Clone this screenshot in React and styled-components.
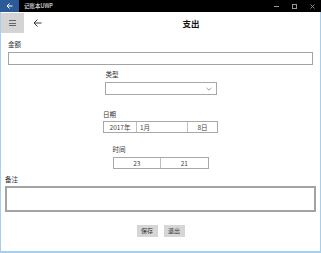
import React from "react";
import styled, { createGlobalStyle } from "styled-components";

const Global = createGlobalStyle`
  html, body { margin: 0; padding: 0; background: #fff; }
  body { font-family: "Noto Sans CJK SC", "Noto Sans", sans-serif; }
  * { box-sizing: border-box; }
`;

const Window = styled.div`
  width: 321px;
  height: 253px;
  display: flex;
  flex-direction: column;
  background: #fff;
`;

const TitleBar = styled.div`
  height: 12px;
  background: #000;
  display: flex;
  align-items: center;
  color: #fff;
`;

const TitleBack = styled.div`
  width: 19px;
  height: 12px;
  background: #2b5a98;
  display: flex;
  align-items: center;
  justify-content: center;
`;

const AppName = styled.span`
  margin-left: 5px;
  font-size: 5.5px;
  line-height: 12px;
  color: #fff;
  flex: 1;
`;

const Controls = styled.div`
  display: flex;
  align-items: center;
  height: 12px;
`;

const Ctrl = styled.div`
  width: 18px;
  height: 12px;
  display: flex;
  align-items: center;
  justify-content: center;
`;

const Frame = styled.div`
  flex: 1;
  display: flex;
  flex-direction: column;
  border-style: solid;
  border-color: #a6cfee;
  border-width: 0 1px 2px 1px;
`;

const Header = styled.div`
  display: flex;
  align-items: center;
  height: 21px;
  padding-top: 1px;
`;

const Hamburger = styled.div`
  width: 23px;
  height: 20px;
  background: #d4d4d4;
  display: flex;
  flex-direction: column;
  align-items: center;
  justify-content: center;
  gap: 1.5px;
`;

const HLine = styled.div`
  width: 7px;
  height: 1px;
  background: #666;
`;

const BackArrow = styled.div`
  margin-left: 9px;
  width: 9px;
  height: 9px;
  display: flex;
  align-items: center;
`;

const PageTitle = styled.div`
  flex: 1;
  text-align: center;
  padding-left: 20px;
  font-size: 8.5px;
  font-weight: bold;
  color: #111;
  line-height: 12px;
`;

const Form = styled.div`
  display: flex;
  flex-direction: column;
`;

const Field = styled.div`
  display: flex;
  flex-direction: column;
  margin-top: ${(p) => p.$mt}px;
  ${(p) =>
    p.$center
      ? `align-self: center; width: ${p.$w}px;`
      : `margin-left: ${p.$ml}px; margin-right: ${p.$mr}px;`}
`;

const Label = styled.div`
  font-size: 6.5px;
  line-height: 8px;
  height: 8px;
  color: #333;
  margin-bottom: ${(p) => p.$gap}px;
  padding-left: ${(p) => p.$pl || 0}px;
`;

const TextBox = styled.div`
  height: ${(p) => p.$h}px;
  border: ${(p) => p.$bw}px solid #a3a3a3;
  background: #fff;
`;

const Combo = styled.div`
  height: 13px;
  border: 1px solid #a8a8a8;
  display: flex;
  align-items: center;
  justify-content: flex-end;
  padding-right: 4px;
`;

const Picker = styled.div`
  height: 12px;
  border: 1px solid #a8a8a8;
  display: flex;
`;

const Seg = styled.div`
  width: ${(p) => p.$w}px;
  flex: ${(p) => (p.$w ? "none" : "1")};
  font-size: 6.5px;
  line-height: 10px;
  color: #444;
  text-align: ${(p) => p.$align || "center"};
  padding-left: ${(p) => p.$pl || 0}px;
  & + & { border-left: 1px solid #c0c0c0; }
`;

const Buttons = styled.div`
  display: flex;
  justify-content: center;
  gap: 6px;
  margin-top: 13px;
`;

const Btn = styled.div`
  width: 21px;
  height: 12px;
  background: #d6d6d6;
  font-size: 6px;
  line-height: 12px;
  text-align: center;
  color: #333;
`;

export default function App() {
  return (
    <>
      <Global />
      <Window>
        <TitleBar>
          <TitleBack>
            <svg width="7" height="6" viewBox="0 0 7 6">
              <path d="M6.5 3H1M3.5 0.5L1 3l2.5 2.5" stroke="#fff" strokeWidth="1" fill="none" />
            </svg>
          </TitleBack>
          <AppName>记账本UWP</AppName>
          <Controls>
            <Ctrl>
              <svg width="5" height="1" viewBox="0 0 5 1">
                <rect width="5" height="1" fill="#999" />
              </svg>
            </Ctrl>
            <Ctrl>
              <svg width="5" height="5" viewBox="0 0 5 5">
                <rect x="0.5" y="0.5" width="4" height="4" stroke="#999" fill="none" />
              </svg>
            </Ctrl>
            <Ctrl>
              <svg width="5" height="5" viewBox="0 0 5 5">
                <path d="M0.5 0.5L4.5 4.5M4.5 0.5L0.5 4.5" stroke="#999" strokeWidth="0.9" />
              </svg>
            </Ctrl>
          </Controls>
        </TitleBar>
        <Frame>
          <Header>
            <Hamburger>
              <HLine />
              <HLine />
              <HLine />
            </Hamburger>
            <BackArrow>
              <svg width="9" height="8" viewBox="0 0 9 8">
                <path d="M8.5 4H1M4.5 0.5L1 4l3.5 3.5" stroke="#222" strokeWidth="0.9" fill="none" />
              </svg>
            </BackArrow>
            <PageTitle>支出</PageTitle>
          </Header>
          <Form>
            <Field $mt={7} $ml={7} $mr={7}>
              <Label $gap={4}>金额</Label>
              <TextBox $h={13} $bw={1} />
            </Field>
            <Field $mt={5} $center $w={112}>
              <Label $gap={4} $pl={1}>类型</Label>
              <Combo>
                <svg width="6" height="4" viewBox="0 0 6 4">
                  <path d="M0.5 0.8L3 3.2l2.5-2.4" stroke="#777" strokeWidth="0.7" fill="none" />
                </svg>
              </Combo>
            </Field>
            <Field $mt={15} $center $w={115}>
              <Label $gap={3}>日期</Label>
              <Picker>
                <Seg $w={32}>2017年</Seg>
                <Seg $align="left" $pl={3}>1月</Seg>
                <Seg $w={30}>8日</Seg>
              </Picker>
            </Field>
            <Field $mt={12} $center $w={96}>
              <Label $gap={4}>时间</Label>
              <Picker>
                <Seg>23</Seg>
                <Seg>21</Seg>
              </Picker>
            </Field>
            <Field $mt={6} $ml={4} $mr={4}>
              <Label $gap={3}>备注</Label>
              <TextBox $h={26} $bw={2} />
            </Field>
            <Buttons>
              <Btn>保存</Btn>
              <Btn>退出</Btn>
            </Buttons>
          </Form>
        </Frame>
      </Window>
    </>
  );
}
